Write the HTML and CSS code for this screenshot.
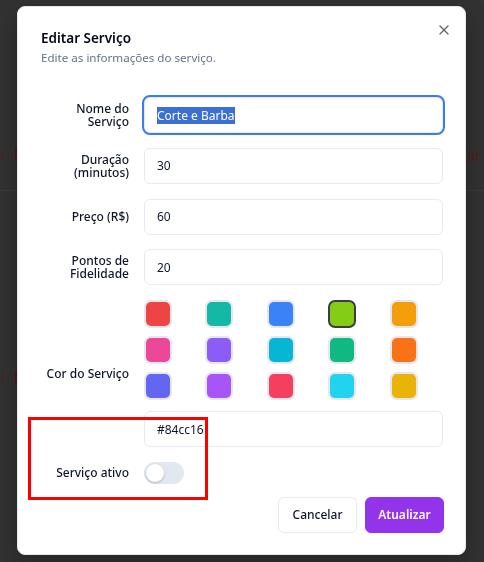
FILE: index.html
```html
<!DOCTYPE html>
<html lang="pt-BR">
<head>
<meta charset="utf-8">
<title>Editar Serviço</title>
<link rel="stylesheet" href="styles.css">
</head>
<body>
<div class="page">
  <div class="bg-row">
    <span class="bg-glyph">J</span>
    <span class="bg-bar"></span>
    <span class="bg-spacer"></span>
    <span class="bg-del">Excluir</span>
  </div>
  <div class="bg-line"></div>
  <div class="bg-row bg-row2">
    <span class="bg-glyph">J</span>
    <span class="bg-bar"></span>
    <span class="bg-spacer"></span>
  </div>
</div>

<div class="dialog" role="dialog" aria-labelledby="dlg-title">
  <button class="close" type="button" aria-label="Fechar">
    <svg viewBox="0 0 24 24" width="16" height="16" fill="none" stroke="currentColor" stroke-width="2" stroke-linecap="round" stroke-linejoin="round"><path d="M18 6 6 18"/><path d="m6 6 12 12"/></svg>
  </button>
  <header class="head">
    <h2 class="title" id="dlg-title">Editar Serviço</h2>
    <p class="desc">Edite as informações do serviço.</p>
  </header>

  <form class="form">
    <label class="lbl">Nome do<br>Serviço</label>
    <div class="field focus"><span class="sel">Corte e Barba</span></div>

    <label class="lbl">Duração<br>(minutos)</label>
    <div class="field">30</div>

    <label class="lbl">Preço (R$)</label>
    <div class="field">60</div>

    <label class="lbl">Pontos de<br>Fidelidade</label>
    <div class="field">20</div>

    <label class="lbl">Cor do Serviço</label>
    <div class="color-cell">
      <div class="swatches">
        <span class="sw c-red"></span>
        <span class="sw c-teal"></span>
        <span class="sw c-blue"></span>
        <span class="sw c-lime selected"></span>
        <span class="sw c-amber"></span>
        <span class="sw c-pink"></span>
        <span class="sw c-violet"></span>
        <span class="sw c-cyan"></span>
        <span class="sw c-emerald"></span>
        <span class="sw c-orange"></span>
        <span class="sw c-indigo"></span>
        <span class="sw c-purple"></span>
        <span class="sw c-rose"></span>
        <span class="sw c-sky"></span>
        <span class="sw c-yellow"></span>
      </div>
      <div class="field hex">#84cc16</div>
    </div>

    <label class="lbl">Serviço ativo</label>
    <div class="toggle-cell"><span class="switch"><span class="thumb"></span></span></div>
  </form>

  <footer class="foot">
    <button class="btn outline" type="button">Cancelar</button>
    <button class="btn primary" type="button">Atualizar</button>
  </footer>
</div>

<div class="annot"></div>
</body>
</html>
```

FILE: styles.css
```css
* { box-sizing: border-box; }

html, body {
  margin: 0;
  padding: 0;
}

body {
  width: 484px;
  height: 562px;
  overflow: hidden;
  background: #323232;
  font-family: "Noto Sans", "Open Sans", sans-serif;
  color: #0f172a;
}

/* page behind the modal (dimmed) */
.page {
  height: 562px;
  padding-top: 132px;
  background: #323232;
}

.bg-row {
  display: flex;
  align-items: center;
  height: 46px;
}

.bg-row2 {
  margin-top: 164px;
}

.bg-glyph {
  margin-left: 0;
  font-size: 13px;
  color: #4a2424;
  font-family: "Liberation Serif", serif;
}

.bg-bar {
  width: 2px;
  height: 12px;
  margin-left: 10px;
  background: #4e1a1a;
}

.bg-spacer { flex: 1; }

.bg-del {
  margin-right: 3px;
  font-size: 14px;
  color: #521c1c;
}

.bg-line {
  margin-top: 12px;
  height: 1px;
  background: #3a3a3a;
}

/* dialog */
.dialog {
  position: fixed;
  left: 17px;
  top: 6px;
  width: 449px;
  padding: 22px 22px 21px 23px;
  background: #ffffff;
  border: 1px solid #e2e8f0;
  border-radius: 8px;
  box-shadow: 0 10px 25px rgba(0, 0, 0, 0.25);
}

.close {
  position: absolute;
  right: 13px;
  top: 15px;
  width: 16px;
  height: 16px;
  padding: 0;
  border: 0;
  background: none;
  color: #3f4550;
  opacity: 0.8;
  display: flex;
}

.title {
  margin: 0;
  font-size: 13.5px;
  line-height: 18px;
  font-weight: 600;
  color: #020817;
}

.desc {
  margin: 2px 0 0;
  font-size: 11.6px;
  line-height: 18px;
  color: #64748b;
}

.form {
  margin-top: 30px;
  display: grid;
  grid-template-columns: 88px 1fr;
  column-gap: 15px;
  row-gap: 14.75px;
  align-items: center;
}

.lbl {
  text-align: right;
  white-space: nowrap;
  font-size: 12px;
  line-height: 13px;
  font-weight: 500;
  color: #0f172a;
  display: flex;
  justify-content: flex-end;
}

.field {
  height: 36px;
  display: flex;
  align-items: center;
  padding: 0 12px;
  border: 1px solid #e6eaf1;
  border-radius: 6px;
  font-size: 12px;
  color: #0f172a;
  background: #fff;
}

.field.focus {
  outline: 2px solid #3b7cf0;
  outline-offset: 0;
}

.sel {
  background: #3b6fd4;
  color: #ffffff;
  line-height: 17px;
}

.color-cell {
  display: flex;
  flex-direction: column;
}

.swatches {
  display: grid;
  grid-template-columns: repeat(5, 1fr);
  column-gap: 8px;
  row-gap: 8px;
}

.sw {
  width: 28px;
  height: 28px;
  border-radius: 7px;
  border: 2px solid #e7e5ee;
}

.sw.selected {
  border-color: #3a3d44;
}

.c-red { background: #ef4444; }
.c-teal { background: #14b8a6; }
.c-blue { background: #3b82f6; }
.c-lime { background: #84cc16; }
.c-amber { background: #f59e0b; }
.c-pink { background: #ec4899; }
.c-violet { background: #8b5cf6; }
.c-cyan { background: #06b6d4; }
.c-emerald { background: #10b981; }
.c-orange { background: #f97316; }
.c-indigo { background: #6366f1; }
.c-purple { background: #a855f7; }
.c-rose { background: #f43f5e; }
.c-sky { background: #22d3ee; }
.c-yellow { background: #eab308; }

.field.hex {
  margin-top: 11px;
}

.toggle-cell {
  display: flex;
  align-items: center;
}

.switch {
  width: 40px;
  height: 22px;
  padding: 2px;
  border-radius: 11px;
  background: #e2e8f0;
  display: flex;
  align-items: center;
}

.thumb {
  width: 18px;
  height: 18px;
  border-radius: 50%;
  background: #ffffff;
  box-shadow: 0 1px 3px rgba(0, 0, 0, 0.22);
}

.foot {
  margin-top: 13px;
  margin-right: -1px;
  display: flex;
  justify-content: flex-end;
  gap: 8px;
}

.btn {
  width: 79px;
  height: 36px;
  padding: 0;
  border-radius: 6px;
  font-family: "Noto Sans", "Open Sans", sans-serif;
  font-size: 12px;
  font-weight: 500;
  cursor: pointer;
}

.btn.outline {
  background: #ffffff;
  border: 1px solid #e6eaf1;
  color: #0f172a;
}

.btn.primary {
  background: #9333ea;
  border: 1px solid #9333ea;
  color: #ffffff;
  font-weight: 600;
}

/* red annotation rectangle drawn over the screenshot */
.annot {
  position: fixed;
  left: 28px;
  top: 417px;
  width: 180px;
  height: 83px;
  border: 3px solid #ff0000;
  pointer-events: none;
}
```
